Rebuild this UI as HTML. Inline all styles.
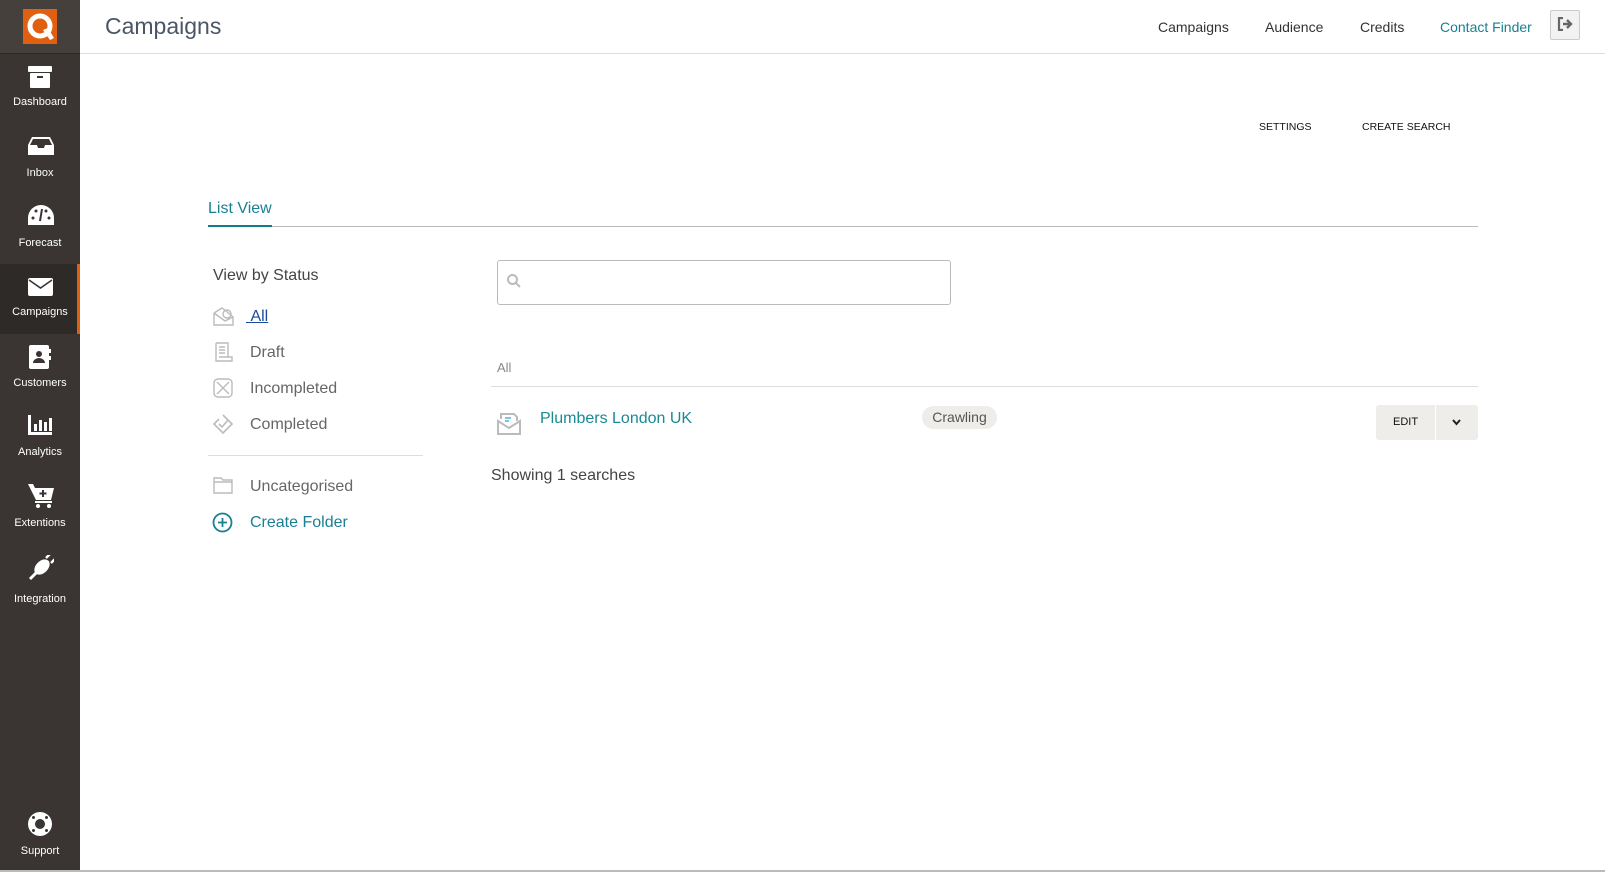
<!DOCTYPE html>
<html><head><meta charset="utf-8"><style>
*{margin:0;padding:0;box-sizing:border-box}
body{width:1605px;height:872px;position:relative;background:#fff;font-family:"Liberation Sans",sans-serif;overflow:hidden;color:#333}
.abs{position:absolute}
#side{left:0;top:0;width:80px;height:870px;background:#3a3532}
#sidetop{left:0;top:0;width:80px;height:54px;background:#45403c;border-bottom:1px solid #2c2826}
.item{position:absolute;left:0;width:80px;text-align:center;color:#fff;font-size:11px}
.item svg{position:absolute;left:28px}
.item span{position:absolute;left:0;width:80px;text-align:center}
.lbl{position:absolute;white-space:nowrap}
.gray{color:#555;font-size:16px}
</style></head><body>
<div id="side" class="abs"></div>
<div id="sidetop" class="abs"></div>
<div class="abs" style="left:23px;top:9px;width:34px;height:35px;background:#e0600f"></div>
<svg class="abs" style="left:23px;top:9px" width="34" height="35" viewBox="0 0 34 35"><circle cx="17" cy="17" r="10" fill="none" stroke="#fff" stroke-width="5"/><path d="M20 21 L27 31 L31 29 L25 19Z" fill="#fff"/></svg>
<div class="abs" style="left:0;top:264px;width:80px;height:70px;background:#2e2a28;border-right:3px solid #e0600f"></div>

<div class="item" style="top:0">
<svg style="top:66px" width="24" height="22" viewBox="0 0 24 22"><rect x="0" y="0" width="24" height="6" rx="1" fill="#fff"/><rect x="2" y="7" width="20" height="15" rx="1" fill="#fff"/><rect x="9" y="10" width="6" height="2" fill="#3a3532"/></svg>
<span style="top:96px">Dashboard</span>
<svg style="top:137px" width="26" height="18" viewBox="0 0 26 18"><path d="M4 0H22L26 8V18H0V8Z M5 2L2 8H9L10 11H16L17 8H24L21 2Z" fill="#fff" fill-rule="evenodd"/></svg>
<span style="top:167px">Inbox</span>
<svg style="top:205px" width="26" height="22" viewBox="0 0 26 22"><path d="M13 0A13 13 0 0 0 0 13V20H26V13A13 13 0 0 0 13 0Z" fill="#fff"/><circle cx="5" cy="13" r="1.5" fill="#3a3532"/><circle cx="8" cy="6" r="1.5" fill="#3a3532"/><circle cx="21" cy="13" r="1.5" fill="#3a3532"/><circle cx="18" cy="6" r="1.5" fill="#3a3532"/><path d="M14 4L12 16" stroke="#3a3532" stroke-width="2"/></svg>
<span style="top:237px">Forecast</span>
<svg style="top:278px" width="25" height="18" viewBox="0 0 25 18"><rect width="25" height="18" rx="2" fill="#fff"/><path d="M1 2L12.5 10L24 2" stroke="#3a3532" stroke-width="1.6" fill="none"/></svg>
<span style="top:306px">Campaigns</span>
<svg style="top:345px;left:29px" width="22" height="24" viewBox="0 0 22 24"><rect x="0" y="0" width="20" height="24" rx="2" fill="#fff"/><circle cx="10" cy="9" r="3" fill="#3a3532"/><path d="M4 18a6 5 0 0 1 12 0Z" fill="#3a3532"/><rect x="20" y="4" width="2" height="4" fill="#fff"/><rect x="20" y="11" width="2" height="4" fill="#fff"/></svg>
<span style="top:377px">Customers</span>
<svg style="top:415px" width="24" height="20" viewBox="0 0 24 20"><path d="M0 0H3V17H24V20H0Z" fill="#fff"/><rect x="6" y="9" width="3" height="7" fill="#fff"/><rect x="11" y="5" width="3" height="11" fill="#fff"/><rect x="16" y="7" width="3" height="9" fill="#fff"/><rect x="21" y="3" width="3" height="13" fill="#fff"/></svg>
<span style="top:446px">Analytics</span>
<svg style="top:484px" width="26" height="24" viewBox="0 0 26 24"><path d="M0 0H5L7 4H26L23 16H8Z" fill="#fff"/><rect x="7" y="17" width="17" height="2" fill="#fff"/><circle cx="10" cy="22" r="2" fill="#fff"/><circle cx="21" cy="22" r="2" fill="#fff"/><path d="M15 6V13M11.5 9.5H18.5" stroke="#3a3532" stroke-width="2"/></svg>
<span style="top:517px">Extentions</span>
<svg style="top:555px" width="26" height="26" viewBox="0 0 26 26"><ellipse cx="14" cy="12" rx="9" ry="6" transform="rotate(-45 14 12)" fill="#fff"/><path d="M2 24L8 18" stroke="#fff" stroke-width="3"/><path d="M18 3L22 -1M23 8L27 4" stroke="#fff" stroke-width="2.5"/></svg>
<span style="top:593px">Integration</span>
<svg style="top:812px" width="24" height="24" viewBox="0 0 24 24"><circle cx="12" cy="12" r="12" fill="#fff"/><circle cx="12" cy="12" r="5" fill="#3a3532"/><circle cx="5.5" cy="5.5" r="1.5" fill="#3a3532"/><circle cx="18.5" cy="5.5" r="1.5" fill="#3a3532"/><circle cx="5.5" cy="18.5" r="1.5" fill="#3a3532"/><circle cx="18.5" cy="18.5" r="1.5" fill="#3a3532"/></svg>
<span style="top:845px">Support</span>
</div>

<div class="abs" style="left:80px;top:53px;width:1525px;height:1px;background:#ddd"></div>
<div class="abs" style="left:0;top:870px;width:1605px;height:2px;background:#bbb"></div>
<div class="lbl" style="left:105px;top:13px;font-size:23px;color:#4a5668">Campaigns</div>
<div class="lbl" style="left:1158px;top:19px;font-size:14px;color:#333">Campaigns</div>
<div class="lbl" style="left:1265px;top:19px;font-size:14px;color:#333">Audience</div>
<div class="lbl" style="left:1360px;top:19px;font-size:14px;color:#333">Credits</div>
<div class="lbl" style="left:1440px;top:19px;font-size:14px;color:#1a7f93">Contact Finder</div>
<div class="abs" style="left:1550px;top:10px;width:30px;height:30px;background:#f2f2f2;border:1px solid #ccc;border-radius:2px"></div>
<svg class="abs" style="left:1557px;top:17px" width="17" height="14" viewBox="0 0 17 14"><path d="M6 1H2V13H6" stroke="#666" stroke-width="2.2" fill="none"/><path d="M6 7H14M10 3L14 7L10 11" stroke="#666" stroke-width="2.4" fill="none"/></svg>

<div class="lbl" style="left:1259px;top:121px;font-size:10.5px;color:#111">SETTINGS</div>
<div class="lbl" style="left:1362px;top:121px;font-size:10.5px;color:#111">CREATE SEARCH</div>

<div class="lbl" style="left:208px;top:200px;font-size:16px;color:#1a7f93">List View</div>
<div class="abs" style="left:208px;top:226px;width:1270px;height:1px;background:#bbb"></div>
<div class="abs" style="left:208px;top:225px;width:64px;height:2px;background:#0e7f8a"></div>

<div class="lbl gray" style="left:213px;top:267px;color:#444">View by Status</div>
<svg class="abs" style="left:213px;top:307px" width="21" height="19" viewBox="0 0 21 19" fill="none" stroke="#bbb" stroke-width="1.4"><path d="M1 6L9 1L13 4M1 6V18H20V10L13 4M1 6L12 14L20 10"/><circle cx="14" cy="7" r="4"/></svg>
<div class="lbl" style="left:246px;top:308px;font-size:16px;color:#1a4a99;text-decoration:underline">&nbsp;All</div>
<svg class="abs" style="left:213px;top:342px" width="20" height="20" viewBox="0 0 20 20" fill="none" stroke="#bbb" stroke-width="1.4"><path d="M3 1H15V15M3 1V19H19V15H6"/><path d="M6 5H12M6 8H12M6 11H12"/></svg>
<div class="lbl gray" style="left:250px;top:344px;color:#666">Draft</div>
<svg class="abs" style="left:213px;top:378px" width="20" height="20" viewBox="0 0 20 20" fill="none" stroke="#bbb" stroke-width="1.4"><rect x="1" y="1" width="18" height="18" rx="4"/><path d="M4 4L16 16M16 4L4 16"/></svg>
<div class="lbl gray" style="left:250px;top:380px;color:#666">Incompleted</div>
<svg class="abs" style="left:213px;top:414px" width="21" height="20" viewBox="0 0 21 20" fill="none" stroke="#bbb" stroke-width="1.6"><path d="M10 1L19 10L10 19L1 10L6 5"/><path d="M6 10L9 13L15 6"/></svg>
<div class="lbl gray" style="left:250px;top:416px;color:#666">Completed</div>
<div class="abs" style="left:208px;top:455px;width:215px;height:1px;background:#ddd"></div>
<svg class="abs" style="left:213px;top:477px" width="20" height="17" viewBox="0 0 20 17" fill="none" stroke="#bbb" stroke-width="1.4"><path d="M1 1H8L10 3H19V16H1Z M1 5H19"/></svg>
<div class="lbl gray" style="left:250px;top:478px;color:#666">Uncategorised</div>
<svg class="abs" style="left:212px;top:512px" width="21" height="21" viewBox="0 0 21 21" fill="none" stroke="#1a7f93" stroke-width="1.8"><circle cx="10.5" cy="10.5" r="9"/><path d="M10.5 6V15M6 10.5H15"/></svg>
<div class="lbl gray" style="left:250px;top:514px;color:#1a7f93">Create Folder</div>

<div class="abs" style="left:497px;top:260px;width:454px;height:45px;border:1px solid #bbb;border-radius:3px"></div>
<svg class="abs" style="left:506px;top:273px" width="16" height="16" viewBox="0 0 16 16" fill="none" stroke="#bbb" stroke-width="2"><circle cx="6.5" cy="6.5" r="4.5"/><path d="M10 10L14 14"/></svg>
<div class="lbl" style="left:497px;top:360px;font-size:13px;color:#888">All</div>
<div class="abs" style="left:491px;top:386px;width:987px;height:1px;background:#ddd"></div>
<svg class="abs" style="left:497px;top:411px" width="24" height="24" viewBox="0 0 24 24" fill="none" stroke="#bbb" stroke-width="2"><path d="M1 10L12 17L23 10V23H1Z"/><path d="M4 8V3H17L20 6V10"/><path d="M8 7H14M8 10H12" stroke="#7cc6e8"/></svg>
<div class="lbl" style="left:540px;top:410px;font-size:16px;color:#1a8a93">Plumbers London UK</div>
<div class="abs" style="left:922px;top:406px;width:75px;height:23px;border-radius:12px;background:#eeedea;font-size:14px;color:#555;text-align:center;line-height:23px">Crawling</div>
<div class="abs" style="left:1376px;top:405px;width:102px;height:35px;border-radius:3px;background:#eeedea"></div>
<div class="abs" style="left:1435px;top:405px;width:1px;height:35px;background:#fff"></div>
<div class="lbl" style="left:1393px;top:416px;font-size:11px;color:#111">EDIT</div>
<svg class="abs" style="left:1452px;top:419px" width="9" height="7" viewBox="0 0 9 7"><path d="M1 1L4.5 5L8 1" stroke="#222" stroke-width="2" fill="none"/></svg>
<div class="lbl" style="left:491px;top:467px;font-size:16px;color:#444">Showing 1 searches</div>
</body></html>
